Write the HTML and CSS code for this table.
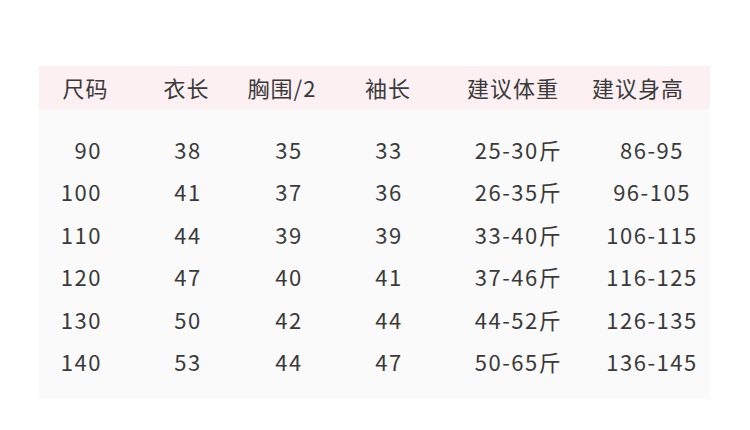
FILE: index.html
```html
<!DOCTYPE html>
<html lang="zh-CN">
<head>
<meta charset="utf-8">
<title>尺码表</title>
<link rel="stylesheet" href="styles.css">
</head>
<body>
<div class="page">
  <div class="size-table">
    <div class="head">
      <div class="cell">尺码</div>
      <div class="cell">衣长</div>
      <div class="cell">胸围/2</div>
      <div class="cell">袖长</div>
      <div class="cell">建议体重</div>
      <div class="cell">建议身高</div>
    </div>
    <div class="body">
      <div class="row"><div class="cell c1">90</div><div class="cell">38</div><div class="cell">35</div><div class="cell">33</div><div class="cell">25-30斤</div><div class="cell">86-95</div></div>
      <div class="row"><div class="cell c1">100</div><div class="cell">41</div><div class="cell">37</div><div class="cell">36</div><div class="cell">26-35斤</div><div class="cell">96-105</div></div>
      <div class="row"><div class="cell c1">110</div><div class="cell">44</div><div class="cell">39</div><div class="cell">39</div><div class="cell">33-40斤</div><div class="cell">106-115</div></div>
      <div class="row"><div class="cell c1">120</div><div class="cell">47</div><div class="cell">40</div><div class="cell">41</div><div class="cell">37-46斤</div><div class="cell">116-125</div></div>
      <div class="row"><div class="cell c1">130</div><div class="cell">50</div><div class="cell">42</div><div class="cell">44</div><div class="cell">44-52斤</div><div class="cell">126-135</div></div>
      <div class="row"><div class="cell c1">140</div><div class="cell">53</div><div class="cell">44</div><div class="cell">47</div><div class="cell">50-65斤</div><div class="cell">136-145</div></div>
    </div>
  </div>
</div>
</body>
</html>
```
FILE: styles.css
```css
html, body {
  margin: 0;
  padding: 0;
  background: #ffffff;
}
.page {
  padding: 66px 0 0 39px;
  width: 750px;
  height: 430px;
  box-sizing: border-box;
}
.size-table {
  width: 671px;
  font-family: "Noto Sans CJK SC", "Noto Sans", sans-serif;
  font-size: 22px;
  letter-spacing: 1px;
  color: #3a3a3a;
}
.head {
  display: grid;
  grid-template-columns: 93px 109px 82px 130px 120px 130px;
  height: 43px;
  align-items: center;
  background: #fdf0f3;
  line-height: 43px;
}
.cell {
  text-align: center;
  white-space: nowrap;
}
.body {
  background: #fafafa;
  padding: 19px 0 17px;
  letter-spacing: 1.5px;
}
.row {
  display: grid;
  grid-template-columns: 100px 98px 104px 96px 163px 104px;
  height: 42.4px;
  line-height: 42.4px;
}
.row .c1 {
  text-align: right;
  padding-right: 37px;
}
```
